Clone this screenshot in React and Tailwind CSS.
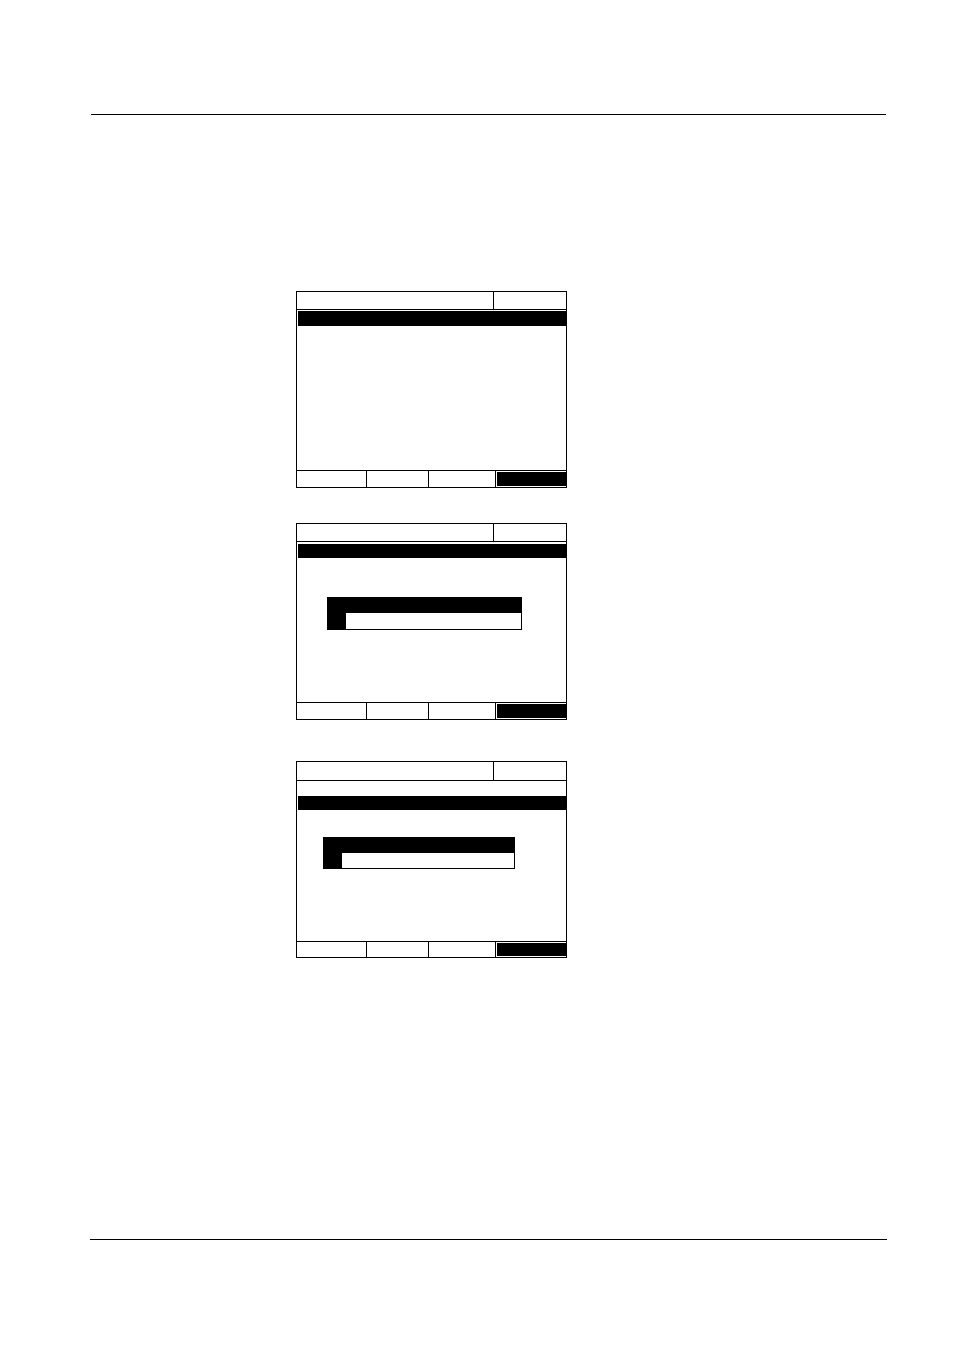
import React from "react";

// one LCD mock-up: header, highlighted bar, optional dialog, soft-key row
// heights of header/footer include their 1px divider line (border-box)
function Screen({ headerH, footerH, barMt, barH, dialog }) {
  return (
    <div className="w-[271px] border border-black bg-white flex flex-col">
      {/* title row */}
      <div className="flex border-b border-black" style={{ height: headerH }}>
        <div className="w-[196px]" />
        <div className="flex-1 border-l border-black" />
      </div>

      {/* body */}
      <div className="h-[160px] flex flex-col">
        <div className="ml-[1px] bg-black" style={{ marginTop: barMt, height: barH }} />
        {dialog && (
          <div
            className="bg-black pr-[1px] pb-[1px] flex flex-col"
            style={{ marginTop: dialog.mt, marginLeft: dialog.ml, width: dialog.w }}
          >
            <div className="h-[16px]" />
            <div className="pl-[19px]">
              <div className="bg-white" style={{ height: dialog.rowH }} />
            </div>
          </div>
        )}
      </div>

      {/* soft keys */}
      <div className="flex border-t border-black" style={{ height: footerH }}>
        <div className="w-[69px]" />
        <div className="w-[62px] border-l border-black" />
        <div className="w-[67px] border-l border-black" />
        <div className="flex-1 border-l border-black pl-[1px] py-[1px]">
          <div className="h-full bg-black" />
        </div>
      </div>
    </div>
  );
}

export default function App() {
  return (
    <div className="w-[954px] h-[1350px] bg-white flex flex-col overflow-hidden">
      <div className="mt-[114px] ml-[91px] w-[795px] h-px bg-black" />

      <div className="ml-[296px] mt-[176px] flex flex-col">
        <Screen headerH={18} footerH={17} barMt={1} barH={15} />
        <div className="mt-[35px]">
          <Screen
            headerH={18}
            footerH={17}
            barMt={2}
            barH={14}
            dialog={{ mt: 39, ml: 30, w: 195, rowH: 16 }}
          />
        </div>
        <div className="mt-[41px]">
          <Screen
            headerH={19}
            footerH={16}
            barMt={15}
            barH={14}
            dialog={{ mt: 27, ml: 26, w: 192, rowH: 15 }}
          />
        </div>
      </div>

      <div className="mt-[281px] ml-[90px] w-[797px] h-px bg-black" />
    </div>
  );
}
